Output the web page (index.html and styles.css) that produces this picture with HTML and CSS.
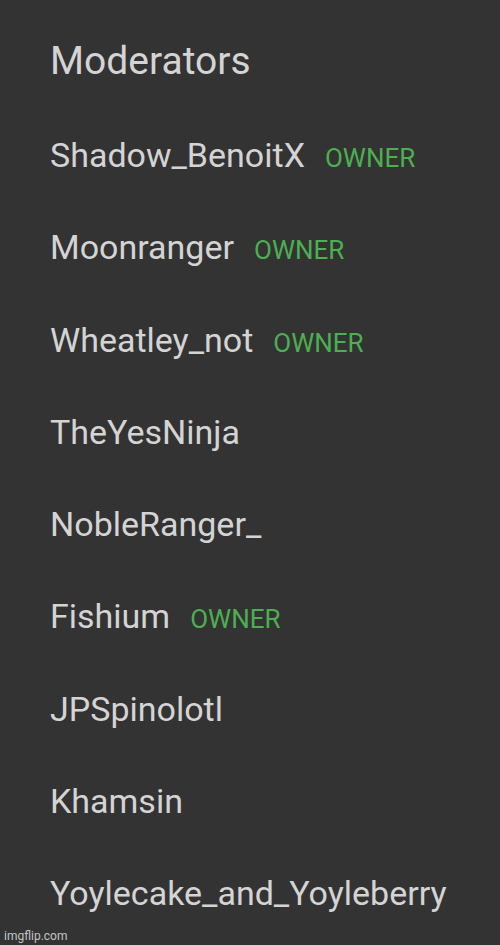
FILE: index.html
```html
<!DOCTYPE html>
<html>
<head>
<meta charset="utf-8">
<link rel="stylesheet" href="styles.css">
</head>
<body>
<div class="panel">
  <h1 class="title">Moderators</h1>
  <ul class="list">
    <li class="row"><span class="name">Shadow_BenoitX</span><span class="badge">OWNER</span></li>
    <li class="row"><span class="name">Moonranger</span><span class="badge">OWNER</span></li>
    <li class="row"><span class="name">Wheatley_not</span><span class="badge">OWNER</span></li>
    <li class="row"><span class="name">TheYesNinja</span></li>
    <li class="row"><span class="name">NobleRanger_</span></li>
    <li class="row"><span class="name">Fishium</span><span class="badge">OWNER</span></li>
    <li class="row"><span class="name">JPSpinolotl</span></li>
    <li class="row"><span class="name">Khamsin</span></li>
    <li class="row"><span class="name">Yoylecake_and_Yoyleberry</span></li>
  </ul>
</div>
<div class="mark">imgflip.com</div>
</body>
</html>
```
FILE: styles.css
```css
html, body {
  margin: 0;
  padding: 0;
  background: #333333;
  width: 500px;
  height: 945px;
  overflow: hidden;
}
body {
  position: relative;
  font-family: Roboto, "Liberation Sans", sans-serif;
  color: #d4d4d4;
}
.panel {
  padding: 39px 0 0 50px;
}
.title {
  margin: 0;
  font-weight: 400;
  font-size: 39px;
  line-height: 44px;
}
.list {
  list-style: none;
  margin: 26px 0 0;
  padding: 0;
}
.row {
  display: flex;
  align-items: baseline;
  height: 92.3px;
  line-height: 92.3px;
}
.name {
  font-size: 34px;
}
.badge {
  margin-left: 20px;
  font-size: 26px;
  color: #4caf50;
}
.mark {
  position: absolute;
  left: 4px;
  bottom: 2px;
  font-size: 12px;
  color: #c4c4c4;
}
```
